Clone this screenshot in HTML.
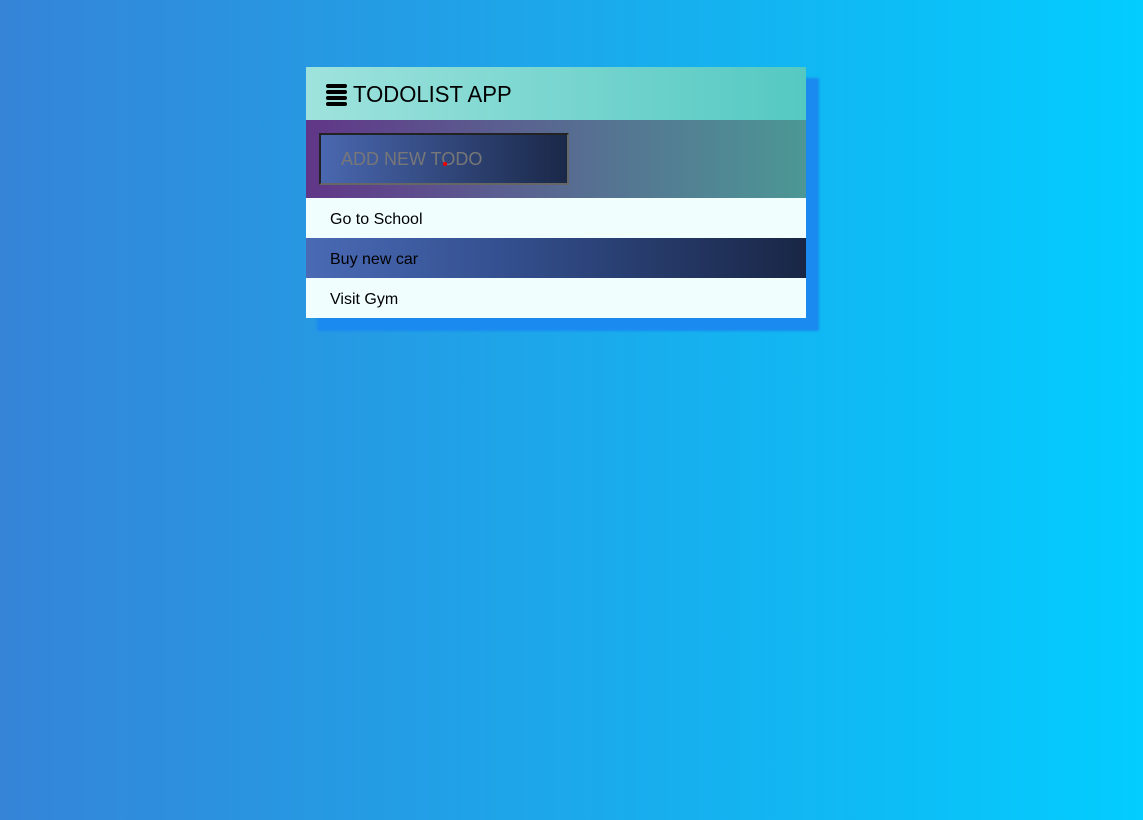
<!DOCTYPE html><html><head><style>
body{margin:0;width:1143px;height:820px;background:linear-gradient(90deg,#3584d8,#02cdfe);font-family:"Liberation Sans",sans-serif;position:relative;overflow:hidden}
.sh{position:absolute;left:317px;top:78px;width:502px;height:253px;background:#1a8af0;filter:blur(1px)}
.card{position:absolute;left:306px;top:67px;width:500px}
.hd{height:53px;background:linear-gradient(90deg,#9fe2dd,#54c9c2);display:flex;align-items:center;padding-left:20px;font-size:23px;color:#000;letter-spacing:0}
.hd span{display:inline-block;transform:scaleX(0.96);transform-origin:left;margin-top:2px}
.ic{width:21px;margin-right:6px;display:flex;flex-direction:column;gap:2px;margin-top:2px}
.ic i{display:block;height:4px;background:#000;border-radius:2px}
.fm{height:78px;background:linear-gradient(90deg,#613688,#5a6090 40%,#4c9795);position:relative}
.in{position:absolute;left:13px;top:13px;width:226px;height:48px;border:2px solid #666;border-top-color:#222;border-left-color:#222;background:linear-gradient(90deg,#4a68b0,#1a2848);color:#777;font-size:18px;line-height:48px;padding-left:20px;box-sizing:content-box}
.dot{position:absolute;left:122px;top:27px;width:4px;height:4px;border-radius:2px;background:#e00}
.it{height:40px;line-height:44px;padding-left:24px;font-size:16px;background:#f0fffe;color:#000}
.it.d{background:linear-gradient(90deg,#4a6ab5,#334f8e 40%,#192645)}
</style></head><body>
<div class="sh"></div>
<div class="card">
<div class="hd"><div class="ic"><i></i><i></i><i></i><i></i></div><span>TODOLIST APP</span></div>
<div class="fm"><div class="in">ADD NEW TODO<div class="dot"></div></div></div>
<div class="it">Go to School</div>
<div class="it d">Buy new car</div>
<div class="it">Visit Gym</div>
</div>
</body></html>
